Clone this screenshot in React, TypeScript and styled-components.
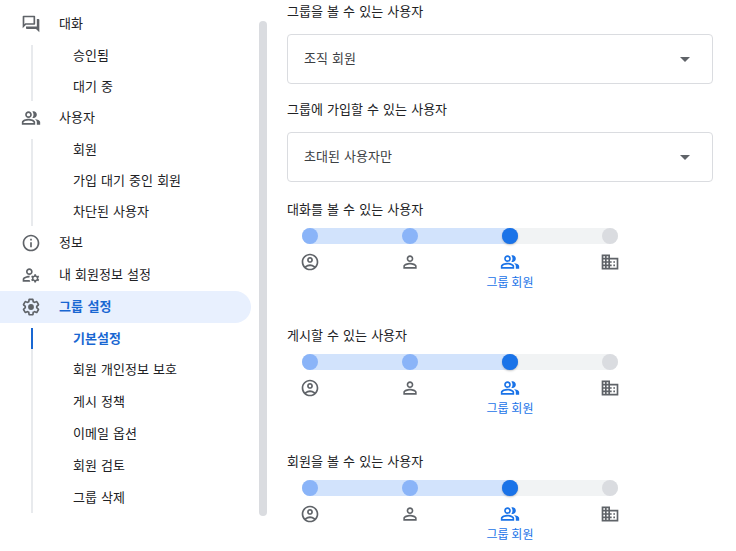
import React, { useState } from 'react';
import styled, { createGlobalStyle } from 'styled-components';
import {
  MdArrowDropDown,
  MdOutlineAccountCircle,
  MdOutlineDomain,
  MdOutlineInfo,
  MdOutlineManageAccounts,
  MdOutlineQuestionAnswer,
  MdPersonOutline,
} from 'react-icons/md';

const GlobalStyle = createGlobalStyle`
  *, *::before, *::after { box-sizing: border-box; }
  body {
    margin: 0;
    background: #fff;
    color: #202124;
    font-family: "DejaVu Sans", "Noto Sans CJK KR", sans-serif;
    font-size: 13px;
    line-height: 20px;
  }
`;

const Page = styled.div`
  display: flex;
  align-items: flex-start;
`;

const Sidebar = styled.aside`
  display: flex;
  flex: none;
  gap: 8px;
  width: 267px;
  padding: 8px 0 32px;
`;

const Nav = styled.nav`
  flex: 1;
  padding-bottom: 2px;
`;

const ScrollThumb = styled.div`
  width: 8px;
  margin-top: 13px;
  border-radius: 4px;
  background: #dadce0;
`;

const NavLink = styled.a<{ $active?: boolean }>`
  display: flex;
  align-items: center;
  gap: 18px;
  height: 32px;
  padding-left: 21px;
  border-radius: 0 16px 16px 0;
  background: ${(p) => (p.$active ? '#e8f0fe' : 'transparent')};
  color: ${(p) => (p.$active ? '#1967d2' : '#202124')};
  font-weight: ${(p) => (p.$active ? 700 : 400)};
  text-decoration: none;

  svg {
    flex: none;
    width: 20px;
    height: 20px;
    color: #5f6368;
  }
`;

const SubNav = styled.div`
  display: flex;
  gap: 40px;
  padding-left: 31px;
`;

const Rail = styled.div`
  width: 2px;
  margin: 5px 0 1px;
  background: #e8eaed;
`;

const RailMark = styled.div`
  height: 21px;
  background: #1967d2;
`;

const SubList = styled.ul`
  flex: 1;
  margin: 0;
  padding: 0;
  list-style: none;
`;

const SubLink = styled.a<{ $active?: boolean; $roomy?: boolean }>`
  display: flex;
  align-items: center;
  height: ${(p) => (p.$roomy && !p.$active ? 32 : 31)}px;
  color: ${(p) => (p.$active ? '#1967d2' : '#202124')};
  font-weight: ${(p) => (p.$active ? 700 : 400)};
  text-decoration: none;
`;

const Main = styled.main`
  flex: 1;
  min-width: 0;
  padding: 2px 23px 0 20px;
`;

const Field = styled.div`
  display: flex;
  flex-direction: column;
  gap: 12px;
  margin-bottom: 16px;
`;

const SelectBox = styled.div`
  display: grid;
  align-items: center;

  & > * { grid-area: 1 / 1; }

  svg {
    justify-self: end;
    margin-right: 16px;
    color: #5f6368;
    pointer-events: none;
  }
`;

const Select = styled.select`
  appearance: none;
  width: 100%;
  height: 50px;
  padding: 0 48px 0 16px;
  border: 1px solid #dadce0;
  border-radius: 4px;
  background: #fff;
  color: #3c4043;
  font: inherit;
`;

const SliderField = styled.div`
  display: flex;
  flex-direction: column;
  height: 126px;
  padding-top: 2px;
`;

const SliderBody = styled.div`
  width: 316px;
  max-width: 100%;
  margin: 8px 0 0 15px;
`;

const Track = styled.div`
  display: grid;
  height: 16px;
  border-radius: 8px;
  background: #f1f3f4;

  & > * { grid-area: 1 / 1; }
`;

const Fill = styled.div`
  height: 16px;
  border-radius: 8px;
  background: #d2e3fc;
`;

const Dots = styled.div`
  display: flex;
  justify-content: space-between;
`;

const Dot = styled.span<{ $on: boolean }>`
  width: 16px;
  height: 16px;
  border-radius: 50%;
  background: ${(p) => (p.$on ? '#8ab4f8' : '#dadce0')};
`;

const Range = styled.input`
  appearance: none;
  width: 100%;
  height: 16px;
  margin: 0;
  background: transparent;

  &::-webkit-slider-thumb {
    appearance: none;
    width: 16px;
    height: 16px;
    border-radius: 50%;
    background: #1a73e8;
    box-shadow: 0 1px 2px rgba(60, 64, 67, 0.3);
  }
`;

const Stops = styled.div`
  display: flex;
  justify-content: space-between;
  margin-top: 8px;
`;

const Stop = styled.div<{ $current: boolean }>`
  display: flex;
  flex-direction: column;
  align-items: center;
  width: 16px;
  color: ${(p) => (p.$current ? '#1a73e8' : '#5f6368')};
  font-family: "Noto Sans CJK KR", sans-serif;
  font-size: 12px;
  white-space: nowrap;

  svg {
    flex: none;
    width: 20px;
    height: 20px;
  }
`;

function PeopleIcon() {
  return (
    <svg viewBox="0 0 24 24" fill="currentColor" aria-hidden="true">
      <path d="M16.67 13.13C18.04 14.06 19 15.32 19 17v3h4v-3c0-2.18-3.57-3.47-6.33-3.87z" />
      <path d="M15 12c2.21 0 4-1.79 4-4s-1.79-4-4-4c-.47 0-.91.1-1.33.24C14.5 5.27 15 6.58 15 8s-.5 2.73-1.33 3.76c.42.14.86.24 1.33.24z" />
      <path d="M9 12c2.21 0 4-1.79 4-4s-1.79-4-4-4-4 1.79-4 4 1.79 4 4 4zm0-6c1.1 0 2 .9 2 2s-.9 2-2 2-2-.9-2-2 .9-2 2-2z" />
      <path d="M9 13c-2.67 0-8 1.34-8 4v3h16v-3c0-2.66-5.33-4-8-4zm6 5H3v-.99C3.2 16.29 6.3 15 9 15s5.8 1.29 6 2v1z" />
    </svg>
  );
}

function GearIcon() {
  return (
    <svg viewBox="0 0 24 24" fill="currentColor" aria-hidden="true">
      <path d="M13.85 22.25h-3.7c-.74 0-1.36-.54-1.45-1.27l-.27-1.89c-.27-.14-.53-.29-.79-.46l-1.8.72c-.7.26-1.47-.03-1.81-.65L2.2 15.53c-.35-.66-.2-1.44.36-1.88l1.53-1.19c-.01-.15-.02-.3-.02-.46 0-.15.01-.31.02-.46l-1.52-1.19c-.59-.45-.74-1.26-.37-1.88l1.85-3.19c.34-.62 1.11-.9 1.79-.63l1.81.73c.26-.17.52-.32.78-.46l.27-1.91c.09-.7.71-1.25 1.44-1.25h3.7c.74 0 1.36.54 1.45 1.27l.27 1.89c.27.14.53.29.79.46l1.8-.72c.71-.26 1.48.03 1.82.65l1.84 3.18c.36.66.2 1.44-.36 1.88l-1.52 1.19c.01.15.02.3.02.46s-.01.31-.02.46l1.52 1.19c.56.45.72 1.23.37 1.86l-1.86 3.22c-.34.62-1.11.9-1.8.63l-1.8-.72c-.26.17-.52.32-.78.46l-.27 1.91c-.1.68-.72 1.22-1.46 1.22zm-3.23-2h2.76l.37-2.55.53-.22c.44-.18.88-.44 1.34-.78l.45-.34 2.38.96 1.38-2.4-2.03-1.58.07-.56c.03-.26.06-.51.06-.78s-.03-.53-.06-.78l-.07-.56 2.03-1.58-1.39-2.4-2.39.96-.45-.35c-.42-.32-.87-.58-1.33-.77l-.52-.22-.37-2.55h-2.76l-.37 2.55-.53.21c-.44.19-.88.44-1.34.79l-.45.33-2.38-.95-1.39 2.39 2.03 1.58-.07.56a7 7 0 0 0-.06.79c0 .26.02.53.06.78l.07.56-2.03 1.58 1.38 2.4 2.39-.96.45.35c.43.33.86.58 1.33.77l.53.22.38 2.55z" />
      <circle cx="12" cy="12" r="3.5" />
    </svg>
  );
}

interface Section {
  label: string;
  icon: React.ReactNode;
  active?: boolean;
  items?: string[];
}

const sections: Section[] = [
  { label: '대화', icon: <MdOutlineQuestionAnswer />, items: ['승인됨', '대기 중'] },
  { label: '사용자', icon: <PeopleIcon />, items: ['회원', '가입 대기 중인 회원', '차단된 사용자'] },
  { label: '정보', icon: <MdOutlineInfo /> },
  { label: '내 회원정보 설정', icon: <MdOutlineManageAccounts /> },
  {
    label: '그룹 설정',
    icon: <GearIcon />,
    active: true,
    items: ['기본설정', '회원 개인정보 보호', '게시 정책', '이메일 옵션', '회원 검토', '그룹 삭제'],
  },
];

const selects = [
  { id: 'see-group', label: '그룹을 볼 수 있는 사용자', value: '조직 회원' },
  { id: 'join-group', label: '그룹에 가입할 수 있는 사용자', value: '초대된 사용자만' },
];

const sliders = [
  { id: 'view-conversations', label: '대화를 볼 수 있는 사용자' },
  { id: 'post', label: '게시할 수 있는 사용자' },
  { id: 'view-members', label: '회원을 볼 수 있는 사용자' },
];

const stops = [
  { name: '그룹 소유자', icon: <MdOutlineAccountCircle /> },
  { name: '그룹 관리자', icon: <MdPersonOutline /> },
  { name: '그룹 회원', icon: <PeopleIcon /> },
  { name: '전체 조직', icon: <MdOutlineDomain /> },
];

function AccessSlider({ id, label }: { id: string; label: string }) {
  const [level, setLevel] = useState(2);
  return (
    <SliderField>
      <label htmlFor={id}>{label}</label>
      <SliderBody>
        <Track>
          <Fill style={{ width: `${(level / 3) * 100}%` }} />
          <Dots>
            {stops.map((stop, i) => (
              <Dot key={stop.name} $on={i <= level} />
            ))}
          </Dots>
          <Range
            id={id}
            type="range"
            min={0}
            max={3}
            value={level}
            aria-valuetext={stops[level].name}
            onChange={(e) => setLevel(Number(e.target.value))}
          />
        </Track>
        <Stops>
          {stops.map((stop, i) => (
            <Stop key={stop.name} $current={i === level}>
              {stop.icon}
              {i === level && <span>{stop.name}</span>}
            </Stop>
          ))}
        </Stops>
      </SliderBody>
    </SliderField>
  );
}

export default function App() {
  return (
    <Page>
      <GlobalStyle />
      <Sidebar>
        <Nav>
          {sections.map((section) => (
            <React.Fragment key={section.label}>
              <NavLink href="#" $active={section.active}>
                {section.icon}
                {section.label}
              </NavLink>
              {section.items && (
                <SubNav>
                  <Rail>{section.active && <RailMark />}</Rail>
                  <SubList>
                    {section.items.map((item, i) => (
                      <li key={item}>
                        <SubLink href="#" $roomy={section.active} $active={section.active && i === 0}>
                          {item}
                        </SubLink>
                      </li>
                    ))}
                  </SubList>
                </SubNav>
              )}
            </React.Fragment>
          ))}
        </Nav>
        <ScrollThumb />
      </Sidebar>
      <Main>
        {selects.map((field) => (
          <Field key={field.id}>
            <label htmlFor={field.id}>{field.label}</label>
            <SelectBox>
              <Select id={field.id} defaultValue={field.value}>
                <option>{field.value}</option>
              </Select>
              <MdArrowDropDown size={24} />
            </SelectBox>
          </Field>
        ))}
        {sliders.map((slider) => (
          <AccessSlider key={slider.id} {...slider} />
        ))}
      </Main>
    </Page>
  );
}
